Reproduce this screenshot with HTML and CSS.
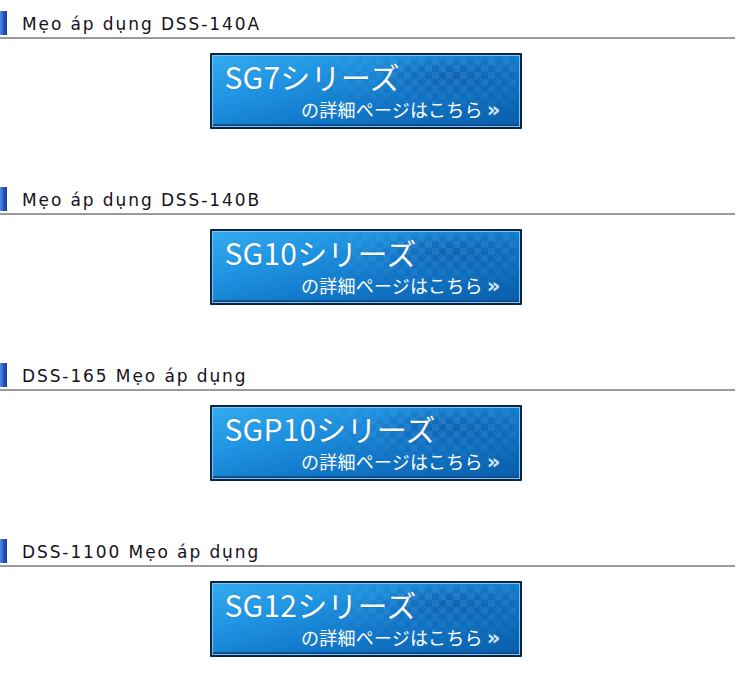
FILE: index.html
```html
<!DOCTYPE html>
<html lang="vi">
<head>
<meta charset="utf-8">
<link rel="stylesheet" href="styles.css">
</head>
<body>
<div class="page">
  <section class="sec">
    <h2 class="head"><span class="bar"></span><span class="title">Mẹo áp dụng DSS-140A</span></h2>
    <a class="btn" href="#"><span class="big">SG7シリーズ</span><span class="small">の詳細ページはこちら<span class="chev">»</span></span></a>
  </section>
  <section class="sec">
    <h2 class="head"><span class="bar"></span><span class="title">Mẹo áp dụng DSS-140B</span></h2>
    <a class="btn" href="#"><span class="big">SG10シリーズ</span><span class="small">の詳細ページはこちら<span class="chev">»</span></span></a>
  </section>
  <section class="sec">
    <h2 class="head"><span class="bar"></span><span class="title">DSS-165 Mẹo áp dụng</span></h2>
    <a class="btn" href="#"><span class="big">SGP10シリーズ</span><span class="small">の詳細ページはこちら<span class="chev">»</span></span></a>
  </section>
  <section class="sec">
    <h2 class="head"><span class="bar"></span><span class="title">DSS-1100 Mẹo áp dụng</span></h2>
    <a class="btn" href="#"><span class="big">SG12シリーズ</span><span class="small">の詳細ページはこちら<span class="chev">»</span></span></a>
  </section>
</div>
</body>
</html>
```

FILE: styles.css
```css
html, body {
  margin: 0;
  padding: 0;
  background: #ffffff;
}
.page {
  width: 735px;
  padding-top: 11px;
}
.sec {
  display: flex;
  flex-direction: column;
  align-items: center;
  margin-bottom: 58px;
}
.head {
  align-self: stretch;
  display: flex;
  align-items: center;
  margin: 0;
  height: 24px;
  border-bottom: 2px solid #9a9a9a;
  padding-bottom: 2px;
  font-weight: normal;
}
.bar {
  width: 7px;
  height: 24px;
  background: linear-gradient(to right, #5a8be0 0%, #1f4fc0 60%, #163c9a 100%);
  flex: none;
}
.title {
  margin-left: 15px;
  font-family: "DejaVu Sans", sans-serif;
  font-size: 17px;
  letter-spacing: 1.9px;
  color: #1a1020;
  padding-top: 2px;
}
.btn {
  position: relative;
  overflow: hidden;
  margin-top: 14px;
  margin-right: 4px;
  width: 308px;
  height: 72px;
  box-sizing: content-box;
  border: 2px solid #0d2540;
  box-shadow: inset 0 0 0 1px #78c4f4, inset 0 -2px 0 1px #0e4c8c;
  border-radius: 1px;
  background:
    radial-gradient(ellipse 80px 22px at 76% 28%, rgba(10, 60, 140, 0.3), rgba(10, 60, 140, 0) 100%),
    linear-gradient(165deg, #34aaf0 0%, #1f94e2 30%, #1277c8 60%, #0a5eaa 100%);
  display: flex;
  flex-direction: column;
  text-decoration: none;
  color: #ffffff;
  font-family: "Noto Sans CJK JP", sans-serif;
}
.btn::after {
  content: "";
  position: absolute;
  inset: 3px;
  background: repeating-conic-gradient(rgba(255, 255, 255, 0.07) 0 25%, rgba(0, 40, 110, 0.07) 0 50%) 0 0 / 14px 14px;
  -webkit-mask-image: radial-gradient(ellipse 160px 45px at 78% 25%, #000 0%, transparent 100%);
  mask-image: radial-gradient(ellipse 160px 45px at 78% 25%, #000 0%, transparent 100%);
  pointer-events: none;
}
.big {
  font-size: 30px;
  line-height: 36px;
  margin-top: 3px;
  margin-left: 13px;
  letter-spacing: 0.2px;
  text-shadow: 0 0 1px rgba(0, 40, 90, 0.4);
}
.small {
  align-self: flex-end;
  font-size: 18px;
  line-height: 24px;
  margin-top: 3px;
  margin-right: 19px;
  letter-spacing: 0.2px;
}
.chev {
  margin-left: 4px;
  font-family: "DejaVu Sans", sans-serif;
  font-weight: bold;
  font-size: 21px;
  color: #d8eeff;
}
```
